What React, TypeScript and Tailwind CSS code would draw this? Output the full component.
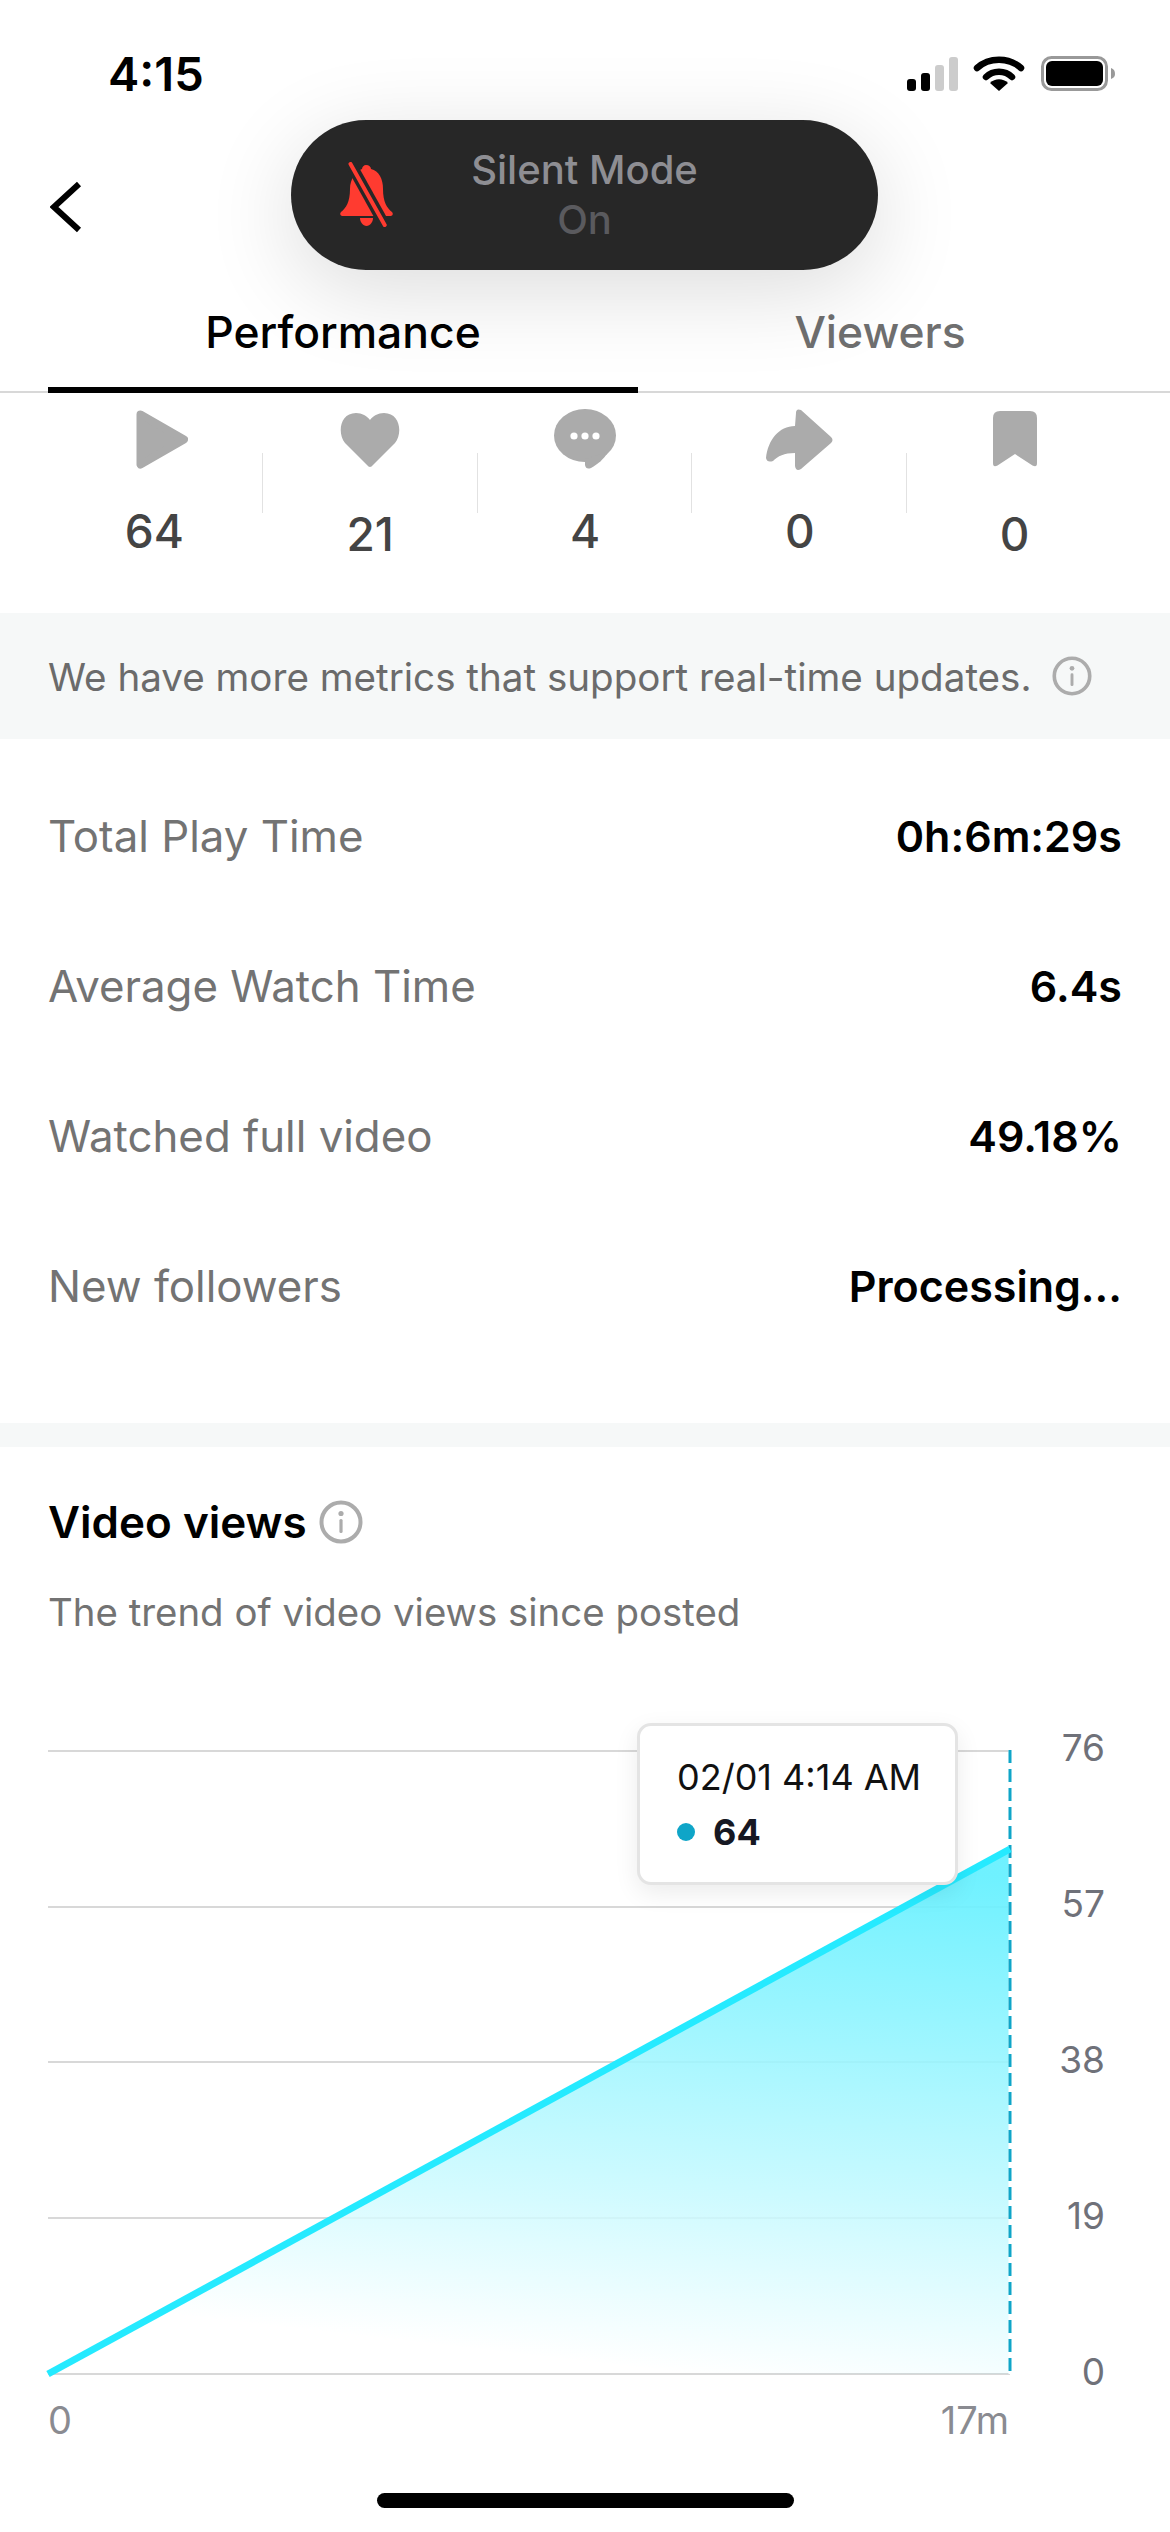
const font = { fontFamily: "Inter, 'Noto Sans', sans-serif" };

function StatusIcons() {
  return (
    <svg width="208" height="36" viewBox="0 0 208 36">
      <rect x="0" y="24" width="9" height="12" rx="3" fill="#000" />
      <rect x="14" y="18" width="9" height="18" rx="3" fill="#000" />
      <rect x="28" y="10" width="9" height="26" rx="3" fill="#cccccc" />
      <rect x="42" y="2" width="9" height="34" rx="3" fill="#cccccc" />
      {/* wifi */}
      <path d="M70 13 C82 2 102 2 114 13" fill="none" stroke="#000" strokeWidth="6.5" strokeLinecap="round" />
      <path d="M79 22 C86 15 98 15 105 22" fill="none" stroke="#000" strokeWidth="6.5" strokeLinecap="round" />
      <path d="M92 36 L83 28 C88 23 96 23 101 28 Z" fill="#000" />
      {/* battery */}
      <rect x="135.5" y="2.5" width="64" height="32" rx="9" fill="none" stroke="#999999" strokeWidth="3" />
      <rect x="139" y="6" width="57" height="25" rx="6" fill="#000" />
      <path d="M204 13 C207 14 208 16 208 19 C208 21 207 23 204 24 Z" fill="#999999" />
    </svg>
  );
}

function BellSlash() {
  return (
    <svg width="53" height="65" viewBox="0 0 53 65">
      <path d="M26 3 C29 3 31 5 31 7 C39 9 43 17 43 27 C43 40 47 46 52 50 Q54 53 51 54 H2 Q-1 53 1 50 C6 46 10 40 10 27 C10 17 16 9 22 7 C22 5 24 3 26 3 Z" fill="#ff3b30" />
      <path d="M20 56 H33 C33 60 30 64 26.5 64 C23 64 20 60 20 56 Z" fill="#ff3b30" />
      <path d="M10.5 1.5 L44.7 63" stroke="#272727" strokeWidth="11" />
      <path d="M10.5 2 L44.7 63" stroke="#ff3b30" strokeWidth="4" strokeLinecap="round" />
    </svg>
  );
}

function InfoIcon({ size }: { size: number }) {
  return (
    <svg width={size} height={size} viewBox="0 0 44 44">
      <circle cx="22" cy="22" r="19.5" fill="none" stroke="#acacac" strokeWidth="4" />
      <circle cx="22" cy="13.5" r="2.6" fill="#acacac" />
      <rect x="20.4" y="19" width="3.2" height="14" rx="1.5" fill="#acacac" />
    </svg>
  );
}

const gray = "#ababab";

const stats = [
  {
    value: "64",
    drop: false,
    shift: "-mr-[13px]",
    icon: (
      <svg width="52" height="59" viewBox="0 0 52 59">
        <path d="M4.5 4.5 L48 29.5 L4.5 54.5 Z" fill={gray} stroke={gray} strokeWidth="8" strokeLinejoin="round" />
      </svg>
    ),
  },
  {
    value: "21",
    drop: true,
    shift: "",
    icon: (
      <svg width="60" height="55" viewBox="0 0 60 55">
        <path d="M30 55 Q28.5 55 27 53 L5 31 C-3 21 0 1 16 1 C22 1 27 4 30 8 C33 4 38 1 44 1 C60 1 63 21 55 31 L33 53 Q31.5 55 30 55 Z" fill={gray} />
      </svg>
    ),
  },
  {
    value: "4",
    drop: false,
    shift: "",
    icon: (
      <svg width="62" height="60" viewBox="0 0 62 60">
        <ellipse cx="31" cy="26.5" rx="31" ry="26.5" fill={gray} />
        <path d="M31 50 L31 56 Q32 61 37 59 C44 55 50 50 54 43 Z" fill={gray} />
        <circle cx="20" cy="27" r="3.6" fill="#fff" />
        <circle cx="31" cy="27" r="3.6" fill="#fff" />
        <circle cx="42" cy="27" r="3.6" fill="#fff" />
      </svg>
    ),
  },
  {
    value: "0",
    drop: false,
    shift: "",
    icon: (
      <svg width="67" height="63" viewBox="0 0 67 63">
        <path d="M30 5 Q30 0 35 2 L65 29 Q68 32 65 35 L35 61 Q30 64 29 58 L29 45 C18 45 12 48 7 53 Q1 55 0 50 C2 32 13 18 29 18 Z" fill={gray} />
      </svg>
    ),
  },
  {
    value: "0",
    drop: true,
    shift: "",
    icon: (
      <svg width="44" height="56" viewBox="0 0 44 56">
        <path d="M7 0 H37 Q44 0 44 7 V52 Q44 57 39.5 54.5 L22 43 L4.5 54.5 Q0 57 0 52 V7 Q0 0 7 0 Z" fill={gray} />
      </svg>
    ),
  },
];

const metrics = [
  ["Total Play Time", "0h:6m:29s"],
  ["Average Watch Time", "6.4s"],
  ["Watched full video", "49.18%"],
  ["New followers", "Processing..."],
];

function Chart() {
  return (
    <svg width="962" height="630" viewBox="0 0 962 630" className="block overflow-visible">
      <defs>
        <linearGradient id="area" gradientUnits="userSpaceOnUse" x1="700" y1="99" x2="640" y2="624">
          <stop offset="0" stopColor="#25eaff" stopOpacity="0.66" />
          <stop offset="1" stopColor="#25eaff" stopOpacity="0" />
        </linearGradient>
      </defs>
      {[1, 157, 312, 468, 624].map((y) => (
        <line key={y} x1="0" x2="962" y1={y} y2={y} stroke="#d8d8d8" strokeWidth="2" />
      ))}
      {/* grid only shows faintly through the fill */}
      <path d="M0 623 L962 99 V623 Z" fill="#fff" fillOpacity="0.8" />
      <path d="M0 624 L962 99 V624 Z" fill="url(#area)" />
      <line x1="962" x2="962" y1="0" y2="624" stroke="#fff" strokeWidth="3" />
      <line x1="962" x2="962" y1="0" y2="624" stroke="#0fa5c8" strokeWidth="3" strokeDasharray="13 6" />
      <line x1="0" y1="624" x2="962" y2="99" stroke="#25eaff" strokeWidth="7" />
    </svg>
  );
}

export default function App() {
  return (
    <div className="relative w-[1170px] h-[2532px] bg-white overflow-hidden flex flex-col" style={font}>
      {/* status bar */}
      <div className="h-[120px] flex items-start justify-between pl-[108px] pr-[55px] pt-[51px]">
        <span className="text-[47px] leading-[46px] font-semibold text-black">4:15</span>
        <div className="pt-[4px]">
          <StatusIcons />
        </div>
      </div>

      {/* back */}
      <div className="h-[174px] pl-[50px] flex items-center">
        <svg width="32" height="52" viewBox="0 0 32 52">
          <path d="M29 3 L4 26 L29 49" fill="none" stroke="#000" strokeWidth="6" />
        </svg>
      </div>

      {/* tabs */}
      <div className="h-[99px] px-[48px] flex border-b-2 border-[#d8d8d8]">
        <div className="w-[590px] h-[99px] -mb-[2px] border-b-[6px] border-black flex justify-center pt-[15px]">
          <span className="text-[44.4px] leading-[46px] font-medium text-black">Performance</span>
        </div>
        <div className="flex-1 flex justify-center pt-[15px]">
          <span className="text-[44.4px] leading-[46px] font-medium text-[#6f6f6f]">Viewers</span>
        </div>
      </div>

      {/* counts */}
      <div className="h-[220px] px-[48px] grid grid-cols-5">
        {stats.map((s, i) => (
          <div key={i} className="relative flex flex-col items-center">
            <div className={`h-[92px] flex items-center ${s.shift}`}>{s.icon}</div>
            <span className={`text-[46px] leading-[46px] text-[#444444] font-medium ${s.drop ? "mt-[26px]" : "mt-[23px]"} ${i === 0 ? "-ml-[2px]" : ""}`}>
              {s.value}
            </span>
            {i < 4 && <div className="absolute right-0 top-[60px] w-px h-[60px] bg-[#e2e2e2]" />}
          </div>
        ))}
      </div>

      {/* banner */}
      <div className="h-[126px] bg-[#f6f8f8] px-[48px] flex items-center gap-[20px]">
        <span className="text-[38.6px] leading-[46px] text-[#6b6b6b] pt-[2px]">We have more metrics that support real-time updates.</span>
        <InfoIcon size={40} />
      </div>

      {/* metrics */}
      <div className="pt-[22px] pb-[62px] px-[48px]">
        {metrics.map(([label, value]) => (
          <div key={label} className="h-[150px] flex items-center justify-between">
            <span className="text-[43.8px] text-[#737373] pt-[2px]">{label}</span>
            <span className="text-[43px] font-semibold text-black">{value}</span>
          </div>
        ))}
      </div>

      <div className="h-[24px] bg-[#f6f8f8]" />

      {/* video views */}
      <div className="px-[48px] pt-[50px]">
        <div className="flex items-center gap-[12px] h-[50px]">
          <span className="text-[44px] leading-[50px] font-semibold text-black">Video views</span>
          <InfoIcon size={44} />
        </div>
        <p className="mt-[40px] text-[38.4px] leading-[50px] text-[#737373]">The trend of video views since posted</p>
      </div>

      <div className="mt-[113px] pl-[48px] flex">
        <div className="relative w-[962px]">
          <Chart />
          <div className="absolute left-[589px] -top-[27px] w-[321px] h-[162px] bg-white border-[3px] border-[#e4e4e4] rounded-[14px] shadow-[0_8px_24px_rgba(0,0,0,0.08)] pl-[37px] pt-[29px]">
            <div className="text-[36px] leading-[44px] text-[#111111]">02/01 4:14 AM</div>
            <div className="flex items-center gap-[18px] mt-[11px]">
              <span className="w-[18px] h-[18px] rounded-full bg-[#0fa5c8]" />
              <span className="text-[36px] leading-[44px] font-bold text-[#161823]">64</span>
            </div>
          </div>
          <div className="flex justify-between text-[38px] leading-[40px] text-[#8a8b91] mt-[20px] pr-[1px]">
            <span>0</span>
            <span>17m</span>
          </div>
        </div>
        <div className="w-[95px] h-[664px] -mt-[22px] flex flex-col justify-between items-end text-[37px] leading-[40px] text-[#6f7179]">
          {["76", "57", "38", "19", "0"].map((t) => (
            <span key={t}>{t}</span>
          ))}
        </div>
      </div>

      {/* home indicator */}
      <div className="absolute left-[377px] top-[2493px] w-[417px] h-[15px] rounded-full bg-black" />

      {/* silent mode toast */}
      <div className="absolute left-[291px] top-[120px] w-[587px] h-[150px] rounded-[75px] bg-[#272727] shadow-[0_20px_90px_rgba(0,0,0,0.14)] flex items-center justify-center">
        <div className="absolute left-[49px] top-[42px]">
          <BellSlash />
        </div>
        <div className="flex flex-col items-center">
          <span className="text-[40px] leading-[50px] font-medium text-[#8e8e93]">Silent Mode</span>
          <span className="text-[40px] leading-[50px] font-medium text-[#5a5a5e]">On</span>
        </div>
      </div>
    </div>
  );
}
